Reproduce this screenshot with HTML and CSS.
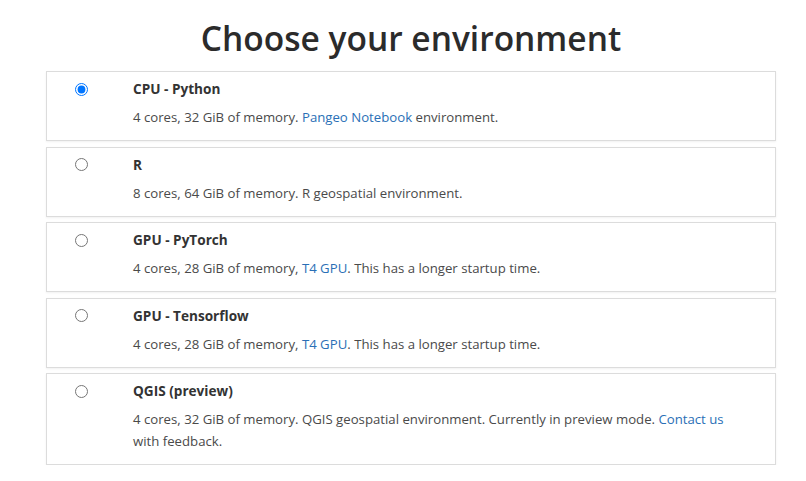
FILE: index.html
```html
<!DOCTYPE html>
<html>
<head>
<meta charset="utf-8">
<link rel="stylesheet" href="styles.css">
</head>
<body>
<div class="page">
  <h1 class="heading">Choose your environment</h1>
  <div class="options">
    <label class="option">
      <span class="radio-col"><input type="radio" name="env" checked></span>
      <span class="body">
        <span class="title">CPU - Python</span>
        <span class="desc">4 cores, 32 GiB of memory. <a href="#">Pangeo Notebook</a> environment.</span>
      </span>
    </label>
    <label class="option">
      <span class="radio-col"><input type="radio" name="env"></span>
      <span class="body">
        <span class="title">R</span>
        <span class="desc">8 cores, 64 GiB of memory. R geospatial environment.</span>
      </span>
    </label>
    <label class="option">
      <span class="radio-col"><input type="radio" name="env"></span>
      <span class="body">
        <span class="title">GPU - PyTorch</span>
        <span class="desc">4 cores, 28 GiB of memory, <a href="#">T4 GPU</a>. This has a longer startup time.</span>
      </span>
    </label>
    <label class="option">
      <span class="radio-col"><input type="radio" name="env"></span>
      <span class="body">
        <span class="title">GPU - Tensorflow</span>
        <span class="desc">4 cores, 28 GiB of memory, <a href="#">T4 GPU</a>. This has a longer startup time.</span>
      </span>
    </label>
    <label class="option">
      <span class="radio-col"><input type="radio" name="env"></span>
      <span class="body">
        <span class="title">QGIS (preview)</span>
        <span class="desc">4 cores, 32 GiB of memory. QGIS geospatial environment. Currently in preview mode. <a href="#">Contact us</a> with feedback.</span>
      </span>
    </label>
  </div>
</div>
</body>
</html>
```
FILE: styles.css
```css
html, body {
  margin: 0;
  padding: 0;
  background: #fff;
}
body {
  font-family: "Open Sans", "Noto Sans", sans-serif;
  color: #333;
}
.page {
  width: 730px;
  margin-left: 46px;
  padding-top: 20px;
}
.heading {
  margin: 0 0 14px 0;
  font-size: 33.5px;
  line-height: 37px;
  font-weight: 600;
  text-align: center;
  color: #2b2b2b;
}
.options {
  display: flex;
  flex-direction: column;
  gap: 5.5px;
}
.option {
  display: flex;
  border: 1px solid #dcdcdc;
  box-shadow: 0 1px 2px rgba(0, 0, 0, 0.06);
  padding: 6px 0 12px 0;
  background: #fff;
}
.radio-col {
  display: flex;
  align-items: center;
  width: 86px;
  height: 22px;
  padding-left: 28px;
  box-sizing: border-box;
  flex: none;
}
.radio-col input {
  margin: 0;
  width: 13px;
  height: 13px;
}
.body {
  display: flex;
  flex-direction: column;
  gap: 6px;
  padding-right: 40px;
}
.title {
  font-size: 13.6px;
  line-height: 22px;
  font-weight: 700;
  color: #333;
}
.desc {
  font-size: 13.2px;
  line-height: 22px;
  color: #4a4a4a;
}
.desc a {
  color: #2a6fb6;
  text-decoration: none;
}
```
